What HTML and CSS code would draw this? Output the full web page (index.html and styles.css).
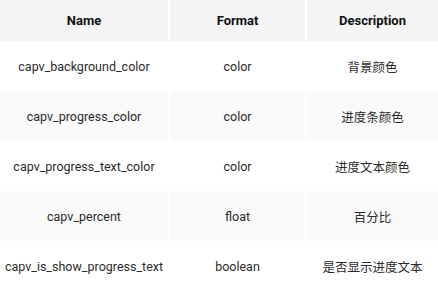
FILE: index.html
```html
<html>
	<head>
		<meta charset="utf-8">
		<link rel="stylesheet" href="styles.css">
	</head>
	<body>
		<table class="attrs">
			<tr><th class="col-name">Name</th><th class="col-format">Format</th><th>Description</th></tr>
			<tr><td>capv_background_color</td><td>color</td><td>背景颜色</td></tr>
			<tr class="alt"><td>capv_progress_color</td><td>color</td><td>进度条颜色</td></tr>
			<tr><td>capv_progress_text_color</td><td>color</td><td>进度文本颜色</td></tr>
			<tr class="alt"><td>capv_percent</td><td>float</td><td>百分比</td></tr>
			<tr><td>capv_is_show_progress_text</td><td>boolean</td><td>是否显示进度文本</td></tr>
		</table>
	</body>
</html>
```

FILE: styles.css
```css
body {
    margin: 0;
    background: #ffffff;
    font-family: Roboto, "Noto Sans CJK SC", sans-serif;
    color: #2b2b2b;
}

table.attrs {
    width: 438px;
    border-collapse: separate;
    border-spacing: 0;
    table-layout: fixed;
}

th, td {
    box-sizing: border-box;
    text-align: center;
    vertical-align: middle;
    padding: 0 2px;
    border-right: 2px solid #ffffff;
}

th:last-child, td:last-child {
    border-right: none;
}

th {
    height: 41px;
    font-size: 13px;
    font-weight: bold;
    color: #111111;
    background: #f5f5f5;
}

td {
    height: 50px;
    font-size: 12.5px;
}

tr.alt td {
    background: #fafafa;
}

.col-name {
    width: 170px;
}

.col-format {
    width: 137px;
}
```
